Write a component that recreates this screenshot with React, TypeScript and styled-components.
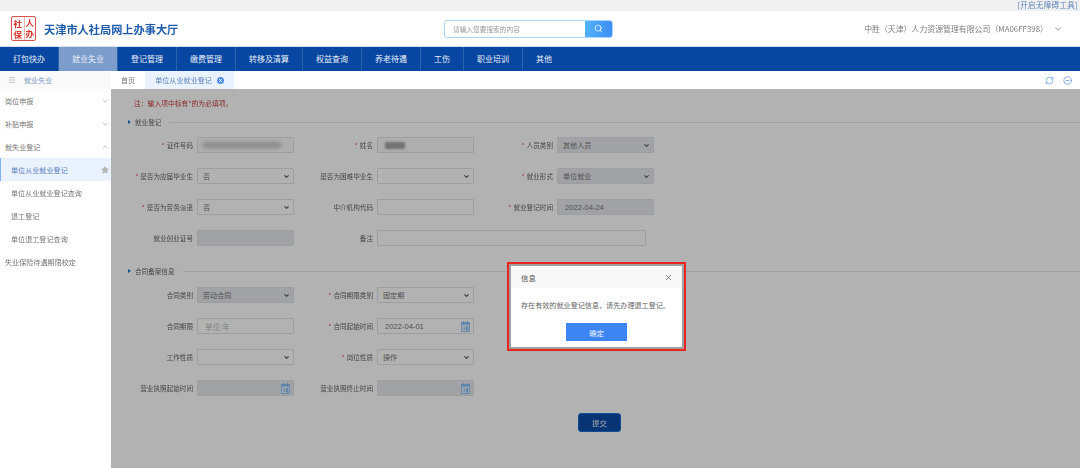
import React from 'react'
import styled, { createGlobalStyle } from 'styled-components'
import { ChevronDown, ChevronUp, Menu, RefreshCw, MinusCircle, X, Search, Star } from 'lucide-react'

const GlobalStyle = createGlobalStyle`
  html, body { margin: 0; padding: 0; background: #fff; }
  body { width: 1080px; height: 468px; overflow: hidden; font-family: "Noto Sans CJK SC", "Liberation Sans", sans-serif; color: #555; }
  * { box-sizing: border-box; }
`

const navItems = ['打包快办', '就业失业', '登记管理', '缴费管理', '转移及清算', '权益查询', '养老待遇', '工伤', '职业培训', '其他']
const sideItems = [
  { label: '岗位申报', open: false },
  { label: '补贴申报', open: false },
  { label: '就失业登记', open: true },
]
const subItems = ['单位从业就业登记', '单位从业就业登记查询', '退工登记', '单位退工登记查询']

export default function App() {
  return (
    <Page>
      <GlobalStyle />
      <TopStrip>[开启无障碍工具]</TopStrip>
      <Header>
        <Brand>
          <Seal>
            <SealColumn $low>
              <SealChar>社</SealChar>
              <SealChar>保</SealChar>
            </SealColumn>
            <SealColumn>
              <SealChar>人</SealChar>
              <SealChar>办</SealChar>
            </SealColumn>
          </Seal>
          <Title>天津市人社局网上办事大厅</Title>
        </Brand>
        <SearchBox>
          <SearchInput>请输入您要搜索的内容</SearchInput>
          <SearchButton><Search size={9} strokeWidth={2} /></SearchButton>
        </SearchBox>
        <Account>
          中胜（天津）人力资源管理有限公司（MA06FF398）
          <ChevronDown size={10} color="#888" />
        </Account>
      </Header>
      <Nav>
        {navItems.map((n, i) => (
          <NavItem key={n} $active={i === 1}>{n}</NavItem>
        ))}
      </Nav>
      <Main>
        <Sidebar>
          <SideHead><Menu size={8} color="#aaa" /><span>就业失业</span></SideHead>
          {sideItems.map((s) => (
            <SideRow key={s.label}>
              {s.label}
              {s.open ? <ChevronUp size={8} color="#aaa" /> : <ChevronDown size={8} color="#aaa" />}
            </SideRow>
          ))}
          {subItems.map((s, i) => (
            <SubRow key={s} $active={i === 0}>
              {s}
              {i === 0 && <Star size={8} fill="#b5b5b5" color="#b5b5b5" />}
            </SubRow>
          ))}
          <SideRow>失业保险待遇期限校定</SideRow>
        </Sidebar>
        <Work>
          <Tabs>
            <Tab>首页</Tab>
            <Tab $active>
              单位从业就业登记
              <TabClose><X size={5} strokeWidth={4} color="#fff" /></TabClose>
            </Tab>
            <TabTools>
              <RefreshCw size={9} color="#6a9de8" />
              <MinusCircle size={9} color="#6a9de8" />
            </TabTools>
          </Tabs>
          <Content>
            <Note>注：输入项中标有*的为必填项。</Note>
            <SectionHead>就业登记</SectionHead>
            <FormGrid>
              <Field label="证件号码" required><TextBox $soft><MaskedId /></TextBox></Field>
              <Field label="姓名" required><TextBox $soft><MaskedName /></TextBox></Field>
              <Field label="人员类别" required><SelectBox locked>其他人员</SelectBox></Field>
              <Field label="是否为应届毕业生" required><SelectBox>否</SelectBox></Field>
              <Field label="是否为困难毕业生"><SelectBox /></Field>
              <Field label="就业形式" required><SelectBox locked>单位就业</SelectBox></Field>
              <Field label="是否为劳务派遣" required><SelectBox>否</SelectBox></Field>
              <Field label="中介机构代码"><TextBox /></Field>
              <Field label="就业登记时间" required><TextBox $locked>2022-04-24</TextBox></Field>
              <Field label="就业创业证号"><TextBox $locked /></Field>
              <WideField>
                <FieldLabel>备注</FieldLabel>
                <TextBox />
              </WideField>
            </FormGrid>
            <SectionHead $second>合同备案信息</SectionHead>
            <FormGrid>
              <Field label="合同类别"><SelectBox locked>劳动合同</SelectBox></Field>
              <Field label="合同期限类别" required><SelectBox>固定期</SelectBox></Field>
              <GridGap />
              <Field label="合同期限"><TextBox $hint>单位:年</TextBox></Field>
              <Field label="合同起始时间" required><DateBox>2022-04-01</DateBox></Field>
              <GridGap />
              <Field label="工作性质"><SelectBox /></Field>
              <Field label="岗位性质" required><SelectBox>操作</SelectBox></Field>
              <GridGap />
              <Field label="营业执照起始时间"><DateBox locked /></Field>
              <Field label="营业执照终止时间"><DateBox locked /></Field>
            </FormGrid>
            <SubmitRow><SubmitButton>提交</SubmitButton></SubmitRow>
            <Overlay />
            <Callout>
              <Dialog>
                <DialogHead>信息<X size={9} color="#666" /></DialogHead>
                <DialogBody>存在有效的就业登记信息，请先办理退工登记。</DialogBody>
                <DialogFoot><OkButton>确定</OkButton></DialogFoot>
              </Dialog>
            </Callout>
          </Content>
        </Work>
      </Main>
    </Page>
  )
}

function Field({ label, required, children }: { label: string; required?: boolean; children?: React.ReactNode }) {
  return (
    <FieldWrap>
      <FieldLabel>{required && <Req>*</Req>}{label}</FieldLabel>
      {children}
    </FieldWrap>
  )
}

function SelectBox({ children, locked }: { children?: React.ReactNode; locked?: boolean }) {
  return (
    <SelectFrame $locked={locked}>
      <span>{children}</span>
      <ChevronDown size={7} strokeWidth={3.5} color="#555" />
    </SelectFrame>
  )
}

function DateBox({ children, locked }: { children?: React.ReactNode; locked?: boolean }) {
  return (
    <TextBox $locked={locked}>
      {children}
      <CalendarIcon viewBox="0 0 10 12">
        <rect x="0.5" y="1.5" width="9" height="10" fill="#e4f1ff" stroke="#8fc4f7" />
        <rect x="0.5" y="1.5" width="9" height="2.500" fill="#8fc4f7" />
        <path d="M3 0v2.500M7 0v2.500M3.500 6v4M6 6h1.500v4H6z" stroke="#5aa0e6" fill="none" strokeWidth="0.8" />
      </CalendarIcon>
    </TextBox>
  )
}

const Page = styled.div`
  width: 1080px;
  height: 468px;
  display: flex;
  flex-direction: column;
  filter: blur(0.45px);
`
const TopStrip = styled.div`
  height: 11px;
  background: #f0f0f0;
  color: #5b84b8;
  font-size: 7.5px;
  line-height: 9px;
  text-align: right;
  padding-right: 2px;
  letter-spacing: 0.35px;
`
const Header = styled.header`
  height: 35px;
  background: #fff;
  display: flex;
  align-items: center;
`
const Brand = styled.div`
  width: 444px;
  display: flex;
  align-items: center;
  padding-left: 11px;
  gap: 8px;
`
const Seal = styled.div`
  width: 25px;
  height: 25px;
  border: 1px solid #d9534f;
  border-radius: 2px;
  display: grid;
  grid-template-columns: 1fr 1fr;
`
const SealColumn = styled.div<{ $low?: boolean }>`
  display: flex;
  flex-direction: column;
  align-items: center;
  padding-top: ${(p) => (p.$low ? 1 : 0)}px;
  border-left: ${(p) => (p.$low ? '0' : '1px solid #f0b0ac')};
`
const SealChar = styled.span`
  color: #d8352c;
  font-size: 8.5px;
  font-weight: 700;
  line-height: 11px;
  height: 11px;
`
const Title = styled.h1`
  margin: 0;
  color: #1c5cab;
  font-size: 11.2px;
  font-weight: 700;
  white-space: nowrap;
`
const SearchBox = styled.div`
  width: 169px;
  height: 18px;
  display: flex;
  border: 1px solid #a9d8fb;
  border-radius: 3px;
  overflow: hidden;
`
const SearchInput = styled.div`
  flex: 1;
  color: #999;
  font-size: 6.7px;
  line-height: 16px;
  padding-left: 8px;
`
const SearchButton = styled.div`
  width: 27px;
  background: linear-gradient(90deg, #52b4fb, #3e8cf4);
  color: #fff;
  display: flex;
  align-items: center;
  justify-content: center;
`
const Account = styled.div`
  margin-left: auto;
  padding-right: 17px;
  display: flex;
  align-items: center;
  gap: 5px;
  color: #808080;
  font-size: 7.9px;
  white-space: nowrap;
`
const Nav = styled.nav`
  height: 25px;
  background: #0747a1;
  border-top: 1px solid #cfe0f2;
  display: flex;
`
const NavItem = styled.div<{ $active?: boolean }>`
  padding: 0 13px;
  border-right: 1px solid #2a62b0;
  background: ${(p) => (p.$active ? '#7c9ccb' : 'transparent')};
  color: #e8eef8;
  font-size: 8px;
  line-height: 24px;
  white-space: nowrap;
  &:last-child { border-right: 0; }
`
const Main = styled.div`
  flex: 1;
  display: flex;
  min-height: 0;
`
const Sidebar = styled.aside`
  width: 111px;
  background: #fff;
  color: #777;
  font-size: 7.1px;
`
const SideHead = styled.div`
  height: 18px;
  background: #fafafa;
  display: flex;
  align-items: center;
  padding-left: 8px;
  gap: 8px;
  color: #7d9bc4;
`
const SideRow = styled.div`
  height: 23px;
  display: flex;
  align-items: center;
  justify-content: space-between;
  padding: 0 2px 0 5px;
`
const SubRow = styled(SideRow)<{ $active?: boolean }>`
  padding: 0 2px 0 ${(p) => (p.$active ? 10 : 11)}px;
  background: ${(p) => (p.$active ? '#eaf2fe' : '#fff')};
  border-left: ${(p) => (p.$active ? '1px solid #7fb0f2' : '0')};
  color: ${(p) => (p.$active ? '#5c83bd' : '#777')};
`
const Work = styled.div`
  flex: 1;
  display: flex;
  flex-direction: column;
  min-width: 0;
`
const Tabs = styled.div`
  height: 18px;
  background: #fff;
  display: flex;
  color: #777;
  font-size: 7.1px;
`
const Tab = styled.div<{ $active?: boolean }>`
  display: flex;
  align-items: center;
  gap: 5px;
  padding: 0 10px;
  background: ${(p) => (p.$active ? '#eaf2fe' : '#fff')};
  color: ${(p) => (p.$active ? '#5c83bd' : '#777')};
`
const TabClose = styled.span`
  width: 7px;
  height: 7px;
  border-radius: 50%;
  background: #4d8ee8;
  display: flex;
  align-items: center;
  justify-content: center;
`
const TabTools = styled.div`
  margin-left: auto;
  display: flex;
  align-items: center;
  gap: 9px;
  padding-right: 8px;
`
const Content = styled.main`
  flex: 1;
  position: relative;
  background: #fff;
  padding: 9px 0 0 17px;
  overflow: hidden;
`
const Overlay = styled.div`
  position: absolute;
  inset: 0;
  background: rgba(0, 0, 0, 0.3);
`
const Note = styled.div`
  color: #c9403c;
  font-size: 6.8px;
  line-height: 11px;
  padding-left: 6px;
`
const SectionHead = styled.div<{ $second?: boolean }>`
  margin: ${(p) => (p.$second ? '20px 0 11px' : '8px 0 10px')};
  display: flex;
  align-items: center;
  gap: 3px;
  color: #666;
  font-size: 6.6px;
  line-height: 10px;
  &::before {
    content: '';
    border-left: 3px solid #1d78d6;
    border-top: 2.5px solid transparent;
    border-bottom: 2.5px solid transparent;
    margin-right: 1px;
  }
  &::after {
    content: '';
    flex: 1;
    height: 1px;
    margin-left: 5px;
    background: #e6e6e6;
  }
`
const FormGrid = styled.div`
  display: grid;
  grid-template-columns: 166px 180px 180px;
  grid-auto-rows: 16px;
  row-gap: 15px;
`
const FieldWrap = styled.div`
  display: flex;
  justify-content: flex-end;
  align-items: center;
  gap: 4px;
`
const WideField = styled(FieldWrap)`
  grid-column: span 2;
  justify-content: flex-start;
  & > div:first-child { width: 79px; text-align: right; flex: none; }
  & > div:last-child { width: 269px; }
`
const GridGap = styled.div``
const FieldLabel = styled.div`
  color: #666;
  font-size: 6.6px;
  white-space: nowrap;
`
const Req = styled.span`
  color: #e0534f;
  margin-right: 2px;
`
const TextBox = styled.div<{ $locked?: boolean; $soft?: boolean; $hint?: boolean }>`
  width: 97px;
  height: 16px;
  flex: none;
  position: relative;
  display: flex;
  align-items: center;
  padding-left: 7px;
  border: 1px solid #e3e3e3;
  border-radius: 1px;
  background: ${(p) => (p.$locked ? '#e7e9ec' : p.$soft ? '#fafafa' : '#fff')};
  color: ${(p) => (p.$hint ? '#bbb' : '#777')};
  font-size: 7.6px;
  font-family: "Liberation Sans", "Noto Sans CJK SC", sans-serif;
`
const SelectFrame = styled(TextBox)`
  justify-content: space-between;
  padding: 0 3px 0 5px;
  font-size: 7.1px;
`
const MaskedId = styled.span`
  width: 78px;
  height: 6px;
  margin-left: -2px;
  background: #c4c4c4;
  filter: blur(2px);
`
const MaskedName = styled.span`
  width: 20px;
  height: 7px;
  background: #a5a5a5;
  filter: blur(1px);
`
const CalendarIcon = styled.svg`
  position: absolute;
  right: 3px;
  top: 2px;
  width: 9px;
  height: 11px;
`
const SubmitRow = styled.div`
  display: flex;
  padding: 17px 0 0 450px;
`
const SubmitButton = styled.button`
  width: 43px;
  height: 19px;
  border: 1px solid #1b6fd6;
  border-radius: 3px;
  background: #0a4ba8;
  color: #e8eef8;
  font-size: 7.4px;
  font-family: inherit;
  padding: 0;
`
const Callout = styled.div`
  position: absolute;
  left: 396px;
  top: 173px;
  width: 179px;
  height: 89px;
  padding: 2px;
  border: 2px solid #e8261f;
  background: #a0a0a0;
`
const Dialog = styled.div`
  height: 100%;
  background: #fff;
`
const DialogHead = styled.div`
  height: 22px;
  background: #f8f8f8;
  color: #555;
  font-size: 7.4px;
  display: flex;
  align-items: center;
  justify-content: space-between;
  padding: 0 9px 0 10px;
`
const DialogBody = styled.div`
  color: #666;
  font-size: 7.1px;
  line-height: 10px;
  padding: 12px 0 0 10px;
  white-space: nowrap;
`
const DialogFoot = styled.div`
  display: flex;
  justify-content: center;
  padding-top: 13px;
`
const OkButton = styled.button`
  width: 61px;
  height: 18px;
  border: 0;
  background: #3d85f5;
  color: #eaf2ff;
  font-size: 7.4px;
  font-family: inherit;
  padding: 0;
`
